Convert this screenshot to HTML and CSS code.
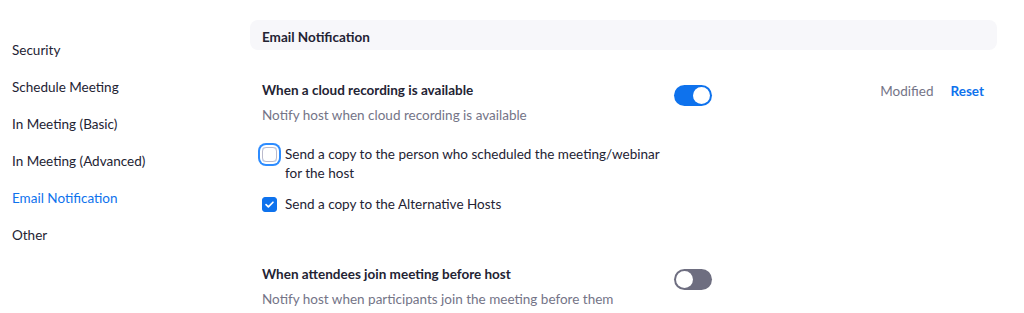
FILE: index.html
```html
<!DOCTYPE html>
<html lang="en">
<head>
    <meta charset="UTF-8">
    <meta name="viewport" content="width=device-width, initial-scale=1.0">
    <title>Settings</title>
    <link rel="stylesheet" href="styles.css">
</head>
<body>
    <div class="sidebar">
        <a href="#" class="nav-item">Security</a>
        <a href="#" class="nav-item">Schedule Meeting</a>
        <a href="#" class="nav-item">In Meeting (Basic)</a>
        <a href="#" class="nav-item">In Meeting (Advanced)</a>
        <a href="#" class="nav-item active">Email Notification</a>
        <a href="#" class="nav-item">Other</a>
    </div>
    <div class="main">
        <div class="section-title">Email Notification</div>

        <div class="setting">
            <div class="setting-text">
                <div class="setting-name">When a cloud recording is available</div>
                <div class="setting-desc">Notify host when cloud recording is available</div>
                <div class="options">
                    <label class="option">
                        <span class="check focused"></span>
                        <span>Send a copy to the person who scheduled the meeting/webinar for the host</span>
                    </label>
                    <label class="option">
                        <span class="check checked">
                            <svg viewBox="0 0 16 16" width="15" height="15"><path d="M4.3 8.2l2.5 2.4 4.9-5" fill="none" stroke="#fff" stroke-width="1.8" stroke-linecap="round" stroke-linejoin="round"/></svg>
                        </span>
                        <span>Send a copy to the Alternative Hosts</span>
                    </label>
                </div>
            </div>
            <div class="toggle on"><span class="knob"></span></div>
            <div class="status">
                <span class="modified">Modified</span>
                <a href="#" class="reset">Reset</a>
            </div>
        </div>

        <div class="setting second">
            <div class="setting-text">
                <div class="setting-name">When attendees join meeting before host</div>
                <div class="setting-desc">Notify host when participants join the meeting before them</div>
            </div>
            <div class="toggle"><span class="knob"></span></div>
        </div>
    </div>
</body>
</html>
```

FILE: styles.css
```css
body {
    font-family: Lato, "Open Sans", sans-serif;
    font-size: 13.5px;
    color: #232333;
    margin: 0;
    padding: 0;
    background-color: #ffffff;
    display: flex;
    height: 313px;
    overflow: hidden;
}
.sidebar {
    width: 238px;
    padding: 32px 0 0 12px;
    display: flex;
    flex-direction: column;
}
.nav-item {
    line-height: 37px;
    color: #232333;
    text-decoration: none;
}
.nav-item.active {
    color: #0e72ed;
}
.main {
    width: 747px;
    padding-top: 20px;
}
.section-title {
    background-color: #f7f7fa;
    border-radius: 8px;
    height: 30px;
    line-height: 34px;
    padding: 0 12px;
    font-weight: bold;
}
.setting {
    display: flex;
    align-items: flex-start;
    padding: 30px 13px 0 12px;
}
.setting.second {
    padding-top: 50px;
}
.setting-text {
    width: 412px;
}
.setting-name {
    font-weight: bold;
    line-height: 20px;
}
.setting-desc {
    color: #747487;
    line-height: 20px;
    margin-top: 5px;
}
.options {
    margin-top: 20px;
    display: flex;
    flex-direction: column;
    gap: 12px;
}
.option {
    display: flex;
    align-items: flex-start;
    line-height: 19px;
}
.check {
    flex: none;
    width: 15px;
    height: 15px;
    box-sizing: border-box;
    border: 1px solid #babacc;
    border-radius: 3px;
    margin: 2px 8px 0 0;
    display: flex;
}
.check.focused {
    box-shadow: 0 0 0 2px #ffffff, 0 0 0 4px #2d8cff;
    border-radius: 4px;
}
.check.checked {
    background-color: #0e72ed;
    border-color: #0e72ed;
}
.check svg {
    margin: -1px;
}
.toggle {
    flex: none;
    width: 38px;
    height: 21px;
    border-radius: 11px;
    background-color: #6e6e80;
    margin-top: 5px;
    display: flex;
    align-items: center;
    padding: 0 2px;
    box-sizing: border-box;
}
.toggle .knob {
    width: 17px;
    height: 17px;
    border-radius: 50%;
    background-color: #ffffff;
}
.toggle.on {
    background-color: #0e72ed;
    justify-content: flex-end;
}
.status {
    flex: 1;
    display: flex;
    justify-content: flex-end;
    gap: 17px;
    line-height: 22px;
}
.modified {
    color: #747487;
}
.reset {
    color: #0e72ed;
    font-weight: bold;
    text-decoration: none;
}
```
